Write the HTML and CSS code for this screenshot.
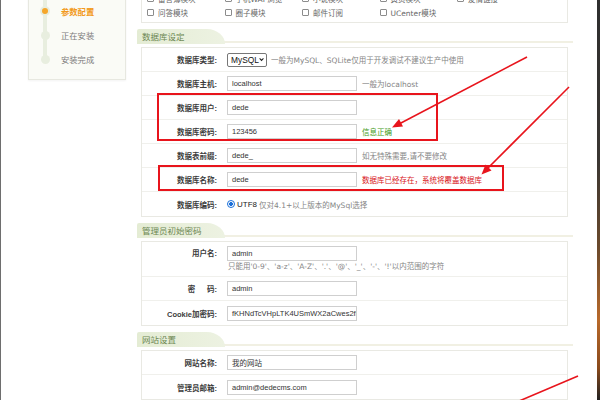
FILE: index.html
```html
<!DOCTYPE html>
<html lang="zh-CN">
<head>
<meta charset="utf-8">
<title>安装设置</title>
<link rel="stylesheet" href="styles.css">
</head>
<body>
<div class="page">
  <div class="edge-left"></div>
  <aside class="side-col">
    <div class="steps">
      <div class="step step-active"><span class="dot-col"><span class="dot"></span></span><span class="step-text">参数配置</span></div>
      <div class="step"><span class="dot-col"><span class="dot"></span></span><span class="step-text">正在安装</span></div>
      <div class="step step-last"><span class="dot-col"><span class="dot"></span></span><span class="step-text">安装完成</span></div>
    </div>
  </aside>
  <main class="main">
    <div class="box modules">
      <div class="mod-grid">
        <span class="mod"><span class="cb"></span>留言簿模块</span>
        <span class="mod"><span class="cb"></span>手机WAP浏览</span>
        <span class="mod"><span class="cb"></span>小说模块</span>
        <span class="mod"><span class="cb"></span>黄页模块</span>
        <span class="mod"><span class="cb"></span>友情链接</span>
        <span class="mod"><span class="cb"></span>问答模块</span>
        <span class="mod"><span class="cb"></span>圈子模块</span>
        <span class="mod"><span class="cb"></span>邮件订阅</span>
        <span class="mod"><span class="cb"></span>UCenter模块</span>
      </div>
    </div>

    <div class="sec-head"><span class="tab">数据库设定</span></div>
    <div class="box">
      <div class="row">
        <span class="lbl">数据库类型:</span>
        <span class="select">MySQL<svg class="chev" viewBox="0 0 8 6" width="7" height="5"><path d="M1 1.2 L4 4.4 L7 1.2" fill="none" stroke="#222" stroke-width="1.6"/></svg></span>
        <span class="hint">一般为MySQL、SQLite仅用于开发调试不建议生产中使用</span>
      </div>
      <div class="row">
        <span class="lbl">数据库主机:</span>
        <span class="inp">localhost</span>
        <span class="hint">一般为localhost</span>
      </div>
      <div class="row">
        <span class="lbl">数据库用户:</span>
        <span class="inp">dede</span>
      </div>
      <div class="row">
        <span class="lbl">数据库密码:</span>
        <span class="inp">123456</span>
        <span class="ok">信息正确</span>
      </div>
      <div class="row">
        <span class="lbl">数据表前缀:</span>
        <span class="inp">dede_</span>
        <span class="hint">如无特殊需要,请不要修改</span>
      </div>
      <div class="row">
        <span class="lbl">数据库名称:</span>
        <span class="inp">dede</span>
        <span class="warn">数据库已经存在，系统将覆盖数据库</span>
      </div>
      <div class="row">
        <span class="lbl">数据库编码:</span>
        <span class="radio"></span>
        <span class="utf">UTF8</span>
        <span class="hint">仅对4.1+以上版本的MySql选择</span>
      </div>
    </div>

    <div class="sec-head"><span class="tab">管理员初始密码</span></div>
    <div class="box">
      <div class="row row-tall">
        <span class="lbl lbl-top">用户名:</span>
        <div class="field-col">
          <span class="inp">admin</span>
          <span class="hint hint-under">只能用'0-9'、'a-z'、'A-Z'、'.'、'@'、'_'、'-'、'!'以内范围的字符</span>
        </div>
      </div>
      <div class="row">
        <span class="lbl">密　&nbsp;&nbsp;码:</span>
        <span class="inp">admin</span>
      </div>
      <div class="row">
        <span class="lbl">Cookie加密码:</span>
        <span class="inp">fKHNdTcVHpLTK4USmWX2aCwes2fl</span>
      </div>
    </div>

    <div class="sec-head"><span class="tab">网站设置</span></div>
    <div class="box">
      <div class="row">
        <span class="lbl">网站名称:</span>
        <span class="inp">我的网站</span>
      </div>
      <div class="row">
        <span class="lbl">管理员邮箱:</span>
        <span class="inp">admin@dedecms.com</span>
      </div>
    </div>
  </main>
  <div class="edge-right"></div>
</div>

<svg class="marks" viewBox="0 0 600 400" width="600" height="400">
  <g fill="none" stroke="#e8141c" stroke-width="2">
    <rect x="158" y="94" width="279" height="46"/>
    <rect x="159" y="166" width="344" height="24"/>
  </g>
  <g stroke="#e8141c" stroke-width="1.6" fill="none">
    <line x1="527" y1="57" x2="400" y2="123.5"/>
    <line x1="569" y1="87" x2="488" y2="168"/>
    <line x1="578" y1="376" x2="498" y2="410"/>
  </g>
  <g fill="#e8141c">
    <polygon points="392,127.5 399,119 403,126.5"/>
    <polygon points="481.5,174.5 485.5,164.5 491.5,170.5"/>
  </g>
</svg>
</body>
</html>
```
FILE: styles.css
```css
* { box-sizing: border-box; }

html, body {
  margin: 0;
  padding: 0;
}

body {
  width: 600px;
  height: 400px;
  overflow: hidden;
  position: relative;
  background: #fff;
  font-family: "Liberation Sans", "Noto Sans CJK SC", sans-serif;
  font-size: 7.5px;
  color: #333;
}

.page {
  display: flex;
  height: 400px;
}

.edge-left {
  flex: none;
  width: 1px;
  background: #6e6e6e;
}

/* ---------- sidebar steps ---------- */
.side-col {
  flex: none;
  width: 98px;
  margin-left: 27px;
}

.steps {
  margin-top: -10px;
  height: 90px;
  background: #fafbf6;
  border: 1px solid #e7e8e0;
  box-shadow: 0 1px 2px rgba(0, 0, 0, 0.05);
  padding: 8px 0;
  font-family: "Noto Sans CJK SC", sans-serif;
}

.step {
  display: flex;
  align-items: center;
  height: 24px;
}

.dot-col {
  flex: none;
  width: 10px;
  height: 24px;
  margin-left: 11px;
  display: flex;
  align-items: center;
  justify-content: center;
  background: linear-gradient(to right, transparent 3px, #e8eedf 3px, #e8eedf 7px, transparent 7px) no-repeat;
}

.step-last .dot-col {
  background-size: 100% 50%;
  background-position: top;
}

.dot {
  width: 9px;
  height: 9px;
  border-radius: 50%;
  background: #e8eedf;
}

.step-active .dot {
  width: 6px;
  height: 6px;
  background: #f5a62a;
  box-shadow: 0 0 0 2px #e8eedf;
}

.step-text {
  margin-left: 11px;
  font-size: 8.3px;
  color: #7a7a7a;
}

.step-active .step-text {
  color: #f29a1c;
  font-weight: bold;
}

/* ---------- main ---------- */
.main {
  flex: none;
  width: 436px;
  margin-left: 11px;
}

.box {
  margin-left: 4px;
  width: 427px;
  border: 1px solid #e9e9e3;
  background: #fff;
}

.modules {
  margin-top: -12px;
  padding: 2px 0 3px 5px;
}

.mod-grid {
  display: grid;
  grid-template-columns: repeat(5, 77.5px);
  grid-auto-rows: 14px;
}

.mod {
  display: flex;
  align-items: center;
  color: #666;
  font-family: "DejaVu Sans", "Noto Sans CJK SC", sans-serif;
}

.cb {
  flex: none;
  width: 7px;
  height: 7px;
  border: 1px solid #8c8c8c;
  border-radius: 1px;
  margin-right: 4px;
  background: #fff;
}

.sec-head {
  margin-top: 6px;
  margin-bottom: 3px;
  height: 15px;
  background: linear-gradient(to bottom, transparent 12px, #f1f0e3 12px, #f1f0e3 14px, transparent 14px);
}

.tab {
  display: block;
  width: 88px;
  height: 15px;
  padding-left: 5px;
  line-height: 15px;
  background: linear-gradient(to right, #e4ecd4, #edf2e2);
  border-top-right-radius: 18px 15px;
  border-top-left-radius: 2px;
  font-family: "Noto Sans CJK SC", sans-serif;
  font-size: 8.5px;
  color: #6c8752;
}

.row {
  display: flex;
  align-items: center;
  height: 24px;
  border-bottom: 1px solid #f0f0ec;
}

.row:last-child {
  border-bottom: none;
}

.row-tall {
  height: 35px;
  align-items: flex-start;
  padding-top: 4px;
}

.lbl {
  flex: none;
  width: 75px;
  margin-right: 10px;
  text-align: right;
  font-weight: bold;
  color: #3b3b3b;
  white-space: nowrap;
}

.lbl-top {
  line-height: 15px;
}

.field-col {
  display: flex;
  flex-direction: column;
}

.inp {
  flex: none;
  display: flex;
  align-items: center;
  width: 130px;
  height: 15px;
  margin-right: 5px;
  padding-left: 4px;
  border: 1px solid #cfcfcf;
  background: #fff;
  color: #333;
  white-space: nowrap;
  overflow: hidden;
}

.hint {
  color: #858585;
  font-family: "DejaVu Sans", "Noto Sans CJK SC", sans-serif;
  white-space: nowrap;
}

.hint-under {
  margin-top: 1px;
  padding-left: 1px;
  line-height: 9px;
}

.ok {
  color: #3f9a22;
  font-family: "Noto Sans CJK SC", sans-serif;
}

.warn {
  color: #d8141a;
  font-family: "Noto Sans CJK SC", sans-serif;
}

.select {
  flex: none;
  display: flex;
  align-items: center;
  justify-content: space-between;
  width: 40px;
  height: 14px;
  margin-right: 4px;
  padding: 0 2px 0 3px;
  border: 1px solid #777;
  border-radius: 2px;
  background: #fff;
  font-size: 8.4px;
  color: #111;
}

.chev {
  display: block;
}

.radio {
  flex: none;
  width: 8px;
  height: 8px;
  border-radius: 50%;
  border: 1.5px solid #1b6fd8;
  background: radial-gradient(circle, #1b6fd8 0, #1b6fd8 1.6px, #fff 2.2px);
}

.utf {
  margin: 0 2px 0 2px;
  font-size: 8px;
  color: #222;
}

.edge-right {
  flex: none;
  width: 3px;
  margin-left: auto;
  background: linear-gradient(to bottom, #2e2e2e 0, #3a3632 40%, #6b4a2c 62%, #b8692a 80%, #8a4a1c 92%, #222 100%);
}

/* annotation overlay */
.marks {
  position: absolute;
  top: 0;
  left: 0;
  pointer-events: none;
}
```
